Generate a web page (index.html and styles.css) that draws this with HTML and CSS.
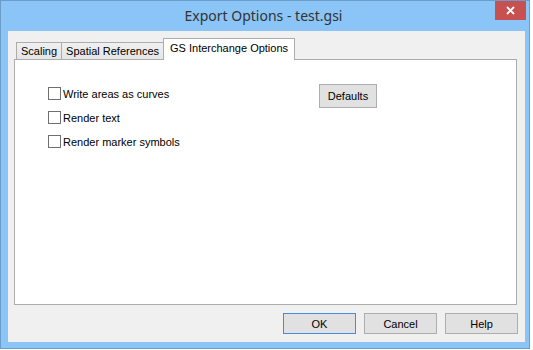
FILE: index.html
```html
<!DOCTYPE html>
<html lang="en">
<head>
  <meta charset="UTF-8">
  <title>Export Options - test.gsi</title>
  <link rel="stylesheet" href="styles.css">
</head>
<body>

  <div class="window">
    <div class="titlebar">
      <span class="spacer"></span>
      <span class="title">Export Options - test.gsi</span>
      <button class="close" aria-label="Close">
        <svg width="9" height="9" viewBox="0 0 9 9">
          <path d="M1 1 L8 8 M8 1 L1 8" stroke="#fff" stroke-width="1.8" fill="none"/>
        </svg>
      </button>
    </div>

    <div class="client">
      <div class="tabs">
        <div class="tab">Scaling</div>
        <div class="tab">Spatial References</div>
        <div class="tab active">GS Interchange Options</div>
      </div>

      <div class="panel">
        <div class="options">
          <label class="check"><span class="box"></span>Write areas as curves</label>
          <label class="check"><span class="box"></span>Render text</label>
          <label class="check"><span class="box"></span>Render marker symbols</label>
        </div>
        <button class="btn defaults">Defaults</button>
      </div>

      <div class="actions">
        <button class="btn default">OK</button>
        <button class="btn">Cancel</button>
        <button class="btn">Help</button>
      </div>
    </div>
  </div>

</body>
</html>
```

FILE: styles.css
```css
body {
  margin: 0;
  background-color: #fff;
  font-family: "Liberation Sans", Arial, sans-serif;
  font-size: 11px;
  color: #000;
}

.window {
  box-sizing: border-box;
  width: 530px;
  height: 349px;
  background-color: #8bc4f6;
  border: 1px solid #6c9cca;
  display: flex;
  flex-direction: column;
}

.titlebar {
  height: 30px;
  display: grid;
  grid-template-columns: 31px 1fr 31px;
  align-items: start;
  padding-right: 3px;
}

.title {
  text-align: center;
  font-family: "Noto Sans", "Open Sans", sans-serif;
  font-size: 14px;
  color: #333;
  line-height: 30px;
}

.close {
  width: 31px;
  height: 19px;
  border: none;
  padding: 0;
  background-color: #c75050;
  display: flex;
  align-items: center;
  justify-content: center;
}

.client {
  flex: 1;
  margin: 0 4px 6px 7px;
  background-color: #f0f0f0;
  display: flex;
  flex-direction: column;
  padding: 7px 8px 8px 6px;
}

.tabs {
  display: flex;
  align-items: flex-end;
  height: 21px;
  padding-left: 2px;
  position: relative;
  z-index: 1;
}

.tab {
  box-sizing: border-box;
  height: 17px;
  padding: 0 4px;
  line-height: 16px;
  border: 1px solid #acacac;
  border-bottom: none;
  border-right: none;
  background: linear-gradient(#f0f0f0, #e5e5e5);
}

.tab.active {
  height: 22px;
  margin-bottom: -1px;
  padding: 0 6px;
  line-height: 18px;
  background: #fff;
  border-right: 1px solid #acacac;
}

.panel {
  height: 246px;
  box-sizing: border-box;
  background-color: #fff;
  border: 1px solid #acacac;
  display: flex;
  align-items: flex-start;
  padding: 24px 0 0 33px;
}

.options {
  width: 271px;
  margin-top: 3px;
  display: flex;
  flex-direction: column;
}

.check {
  height: 24px;
  display: flex;
  align-items: flex-start;
  line-height: 14px;
}

.box {
  box-sizing: border-box;
  width: 13px;
  height: 13px;
  border: 1px solid #707070;
  background-color: #fff;
  margin-right: 2px;
}

.btn {
  box-sizing: border-box;
  width: 73px;
  height: 21px;
  padding: 0;
  font-family: "Liberation Sans", Arial, sans-serif;
  font-size: 11px;
  color: #000;
  background-color: #e1e1e1;
  border: 1px solid #adadad;
}

.btn.defaults {
  width: 58px;
  height: 24px;
}

.btn.default {
  border-color: #3f8ee0;
}

.actions {
  margin-top: 8px;
  display: flex;
  justify-content: flex-end;
  gap: 8px;
  margin-right: -1px;
}
```
